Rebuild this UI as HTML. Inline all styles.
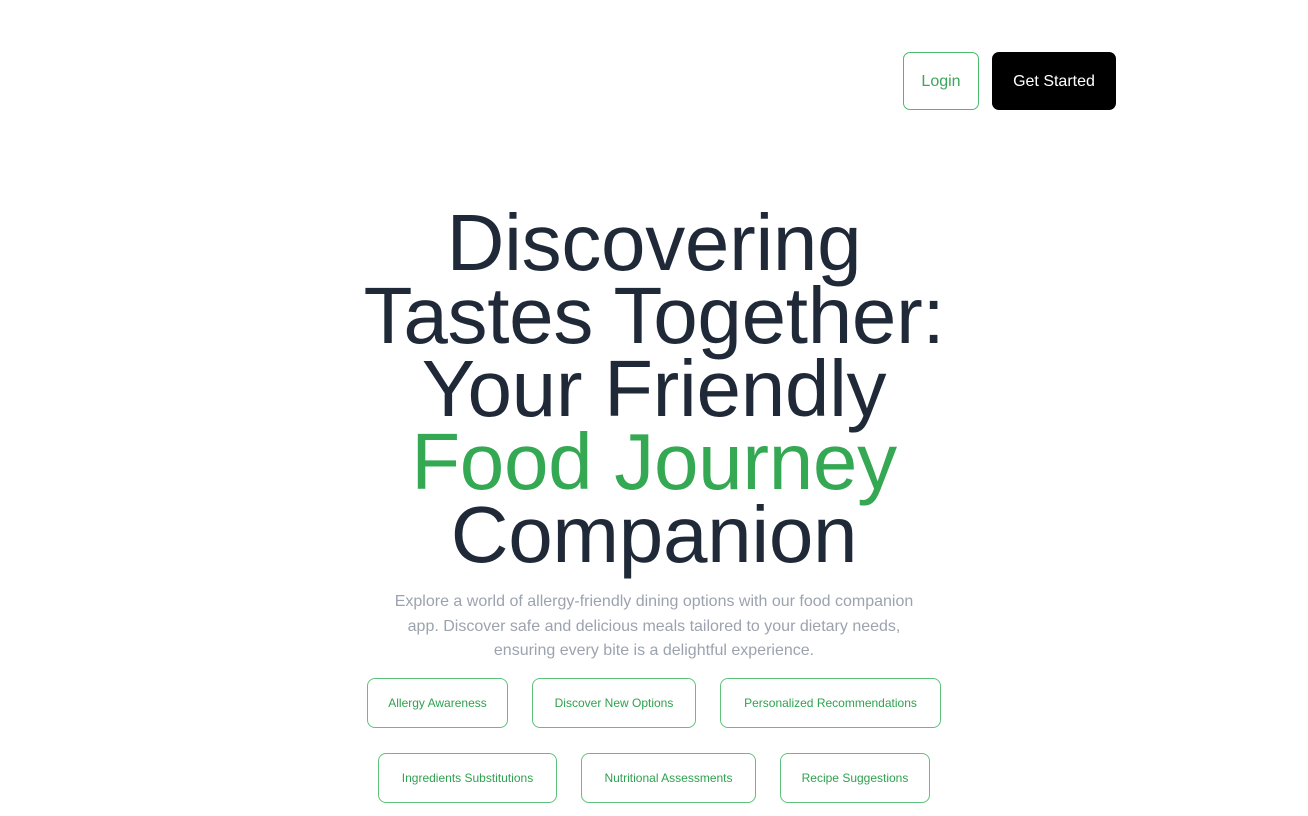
<!DOCTYPE html>
<html><head><meta charset="utf-8"><style>
body{margin:0;width:1308px;height:816px;background:#fff;font-family:"Liberation Sans",sans-serif;position:relative;overflow:hidden}
.btn{position:absolute;top:52px;height:58px;box-sizing:border-box;border-radius:7px;display:flex;align-items:center;justify-content:center;font-size:16px;padding-top:2px}
.login{left:903px;width:76px;border:1px solid #4cbb6c;color:#3aa85a}
.gs{left:992px;width:124px;background:#000;color:#fff}
h1{position:absolute;top:206px;left:0;width:1308px;margin:0;text-align:center;font-weight:400;font-size:80px;line-height:73px;color:#1f2937;letter-spacing:-0.3px}
h1 span{color:#34a853}
p{position:absolute;top:590px;left:382px;width:544px;margin:0;text-align:center;font-size:16px;line-height:24.5px;color:#9ca3af}
.chip{position:absolute;height:50px;box-sizing:border-box;border:1px solid #5fc27b;border-radius:8px;color:#2fa24f;font-size:12px;display:flex;align-items:center;justify-content:center}
</style></head><body>
<div class="btn login">Login</div>
<div class="btn gs">Get Started</div>
<h1>Discovering<br>Tastes Together:<br>Your Friendly<br><span>Food Journey</span><br>Companion</h1>
<p>Explore a world of allergy-friendly dining options with our food companion app. Discover safe and delicious meals tailored to your dietary needs, ensuring every bite is a delightful experience.</p>
<div class="chip" style="left:367px;top:678px;width:141px">Allergy Awareness</div>
<div class="chip" style="left:532px;top:678px;width:164px">Discover New Options</div>
<div class="chip" style="left:720px;top:678px;width:221px">Personalized Recommendations</div>
<div class="chip" style="left:378px;top:753px;width:179px">Ingredients Substitutions</div>
<div class="chip" style="left:581px;top:753px;width:175px">Nutritional Assessments</div>
<div class="chip" style="left:780px;top:753px;width:150px">Recipe Suggestions</div>
</body></html>
